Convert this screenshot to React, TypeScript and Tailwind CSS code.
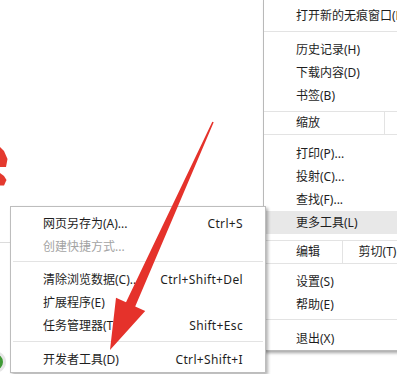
import React from "react";

const font = { fontFamily: '"Noto Sans", "Noto Sans CJK SC", sans-serif' };

function MRow({ children, hl }: { children: React.ReactNode; hl?: boolean }) {
  return (
    <div className={`flex items-center h-[23px] pl-[32px] whitespace-nowrap ${hl ? "bg-[#e8e8e8]" : ""}`}>
      {children}
    </div>
  );
}

function SRow({ label, sc, disabled }: { label: string; sc?: string; disabled?: boolean }) {
  return (
    <div className="flex items-center justify-between h-[23px] pl-[32px] pr-[22px] whitespace-nowrap">
      <span className={disabled ? "text-[#a3a3a3]" : "text-[#1e1e1e]"}>{label}</span>
      {sc ? <span className="text-[#1e1e1e] tracking-[0.35px]">{sc}</span> : null}
    </div>
  );
}

export default function App() {
  return (
    <div
      className="relative w-[397px] h-[374px] overflow-hidden bg-white text-[12px] leading-none text-[#1e1e1e]"
      style={font}
    >
      {/* page fragments behind menus */}
      <svg className="absolute left-0 top-[140px]" width="12" height="50" viewBox="0 140 12 50">
        <polygon points="0,147 4,151 7.5,159 6,167 0,167" fill="#e4392e" />
        <polygon points="0,173 4,176 6.5,180 4,185.5 0,185.5" fill="#e4392e" />
      </svg>
      <div className="absolute left-0 top-[242px] w-[10px] h-px bg-[#dcdcdc]" />
      <div className="absolute left-[-16px] top-[351px] w-[22px] h-[22px] rounded-full border-[3px] border-[#e6e6e6] bg-[#3f9a35]" />

      {/* main menu */}
      <div className="absolute left-[263px] top-0 w-[170px] bg-white border-l border-b border-[#b9b9b9] shadow-[2px_2px_3px_rgba(0,0,0,0.35)] pt-[4px]">
        <MRow>打开新的无痕窗口(N)</MRow>
        <div className="h-px bg-[#e3e3e3] mt-[4px] mb-[6px]" />
        <MRow>历史记录(H)</MRow>
        <MRow>下载内容(D)</MRow>
        <MRow>书签(B)</MRow>
        <div className="flex h-[24px] mt-[4px] mb-[7px] border-y border-[#e3e3e3]">
          <div className="flex items-center w-[121px] pl-[32px] border-r border-[#e3e3e3]">缩放</div>
          <div className="flex-1" />
        </div>
        <MRow>打印(P)...</MRow>
        <MRow>投射(C)...</MRow>
        <MRow>查找(F)...</MRow>
        <MRow hl>更多工具(L)</MRow>
        <div className="flex h-[24px] mt-[6px] mb-[6px] border-y border-[#e3e3e3]">
          <div className="flex items-center w-[79px] pl-[32px] border-r border-[#e3e3e3]">编辑</div>
          <div className="flex items-center justify-center w-[70px] border-r border-[#e3e3e3] whitespace-nowrap">剪切(T)</div>
          <div className="flex-1" />
        </div>
        <MRow>设置(S)</MRow>
        <MRow>帮助(E)</MRow>
        <div className="h-px bg-[#e3e3e3] mt-[3px] mb-[7px]" />
        <MRow>退出(X)</MRow>
      </div>

      {/* submenu */}
      <div className="absolute left-[10px] top-[206px] w-[256px] bg-white border border-[#bdbdbd] shadow-[2px_2px_3px_rgba(0,0,0,0.3)] pt-[5px] pb-[1px]">
        <SRow label="网页另存为(A)..." sc="Ctrl+S" />
        <SRow label="创建快捷方式..." disabled />
        <div className="h-px bg-[#e3e3e3] mx-[2px] mt-[3px] mb-[6px]" />
        <SRow label="清除浏览数据(C)..." sc="Ctrl+Shift+Del" />
        <SRow label="扩展程序(E)" />
        <SRow label="任务管理器(T)" sc="Shift+Esc" />
        <div className="h-px bg-[#e3e3e3] mx-[2px] mt-[4px] mb-[6px]" />
        <SRow label="开发者工具(D)" sc="Ctrl+Shift+I" />
      </div>

      {/* red arrow annotation */}
      <svg className="absolute left-0 top-0 pointer-events-none" width="397" height="374" viewBox="0 0 397 374">
        <polygon
          points="212.3,121.7 126,302.3 116,297.8 110,350 145.2,311 135.2,306.5 213.7,122.3"
          fill="#e5322b"
        />
      </svg>
    </div>
  );
}
